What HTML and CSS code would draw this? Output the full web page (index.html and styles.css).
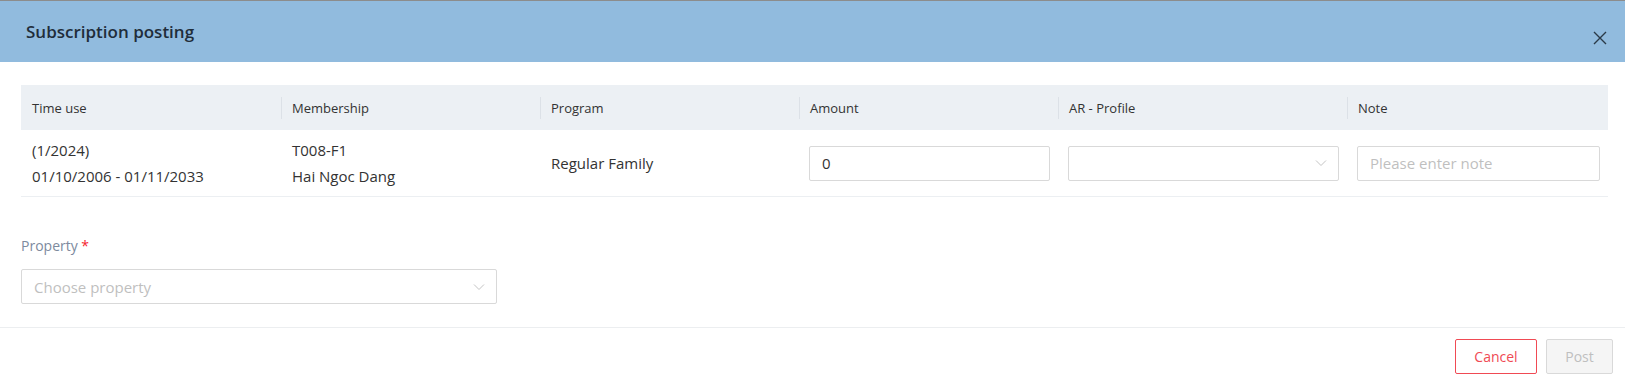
FILE: index.html
```html
<!DOCTYPE html>
<html lang="en">

<head>
  <meta charset="UTF-8">
  <meta name="viewport" content="width=device-width, initial-scale=1.0">
  <title>Subscription posting</title>
  <link rel="stylesheet" href="styles.css">
</head>

<body>
  <div class="modal">
    <header class="modal-header">
      <h2 class="modal-title">Subscription posting</h2>
      <button class="modal-close" type="button" aria-label="Close">
        <svg width="14" height="14" viewBox="0 0 14 14">
          <path d="M1 1L13 13M13 1L1 13" stroke="#2b3a48" stroke-width="1.4" fill="none" />
        </svg>
      </button>
    </header>

    <div class="modal-body">
      <table class="posting-table">
        <colgroup>
          <col style="width: 260px">
          <col style="width: 259px">
          <col style="width: 259px">
          <col style="width: 259px">
          <col style="width: 289px">
          <col style="width: 261px">
        </colgroup>
        <thead>
          <tr>
            <th>Time use</th>
            <th>Membership</th>
            <th>Program</th>
            <th>Amount</th>
            <th>AR - Profile</th>
            <th>Note</th>
          </tr>
        </thead>
        <tbody>
          <tr>
            <td>
              <div class="line">(1/2024)</div>
              <div class="line">01/10/2006 - 01/11/2033</div>
            </td>
            <td>
              <div class="line">T008-F1</div>
              <div class="line">Hai Ngoc Dang</div>
            </td>
            <td>Regular Family</td>
            <td><input class="field" type="text" value="0"></td>
            <td>
              <div class="field select">
                <span class="select-value"></span>
                <svg class="chevron" width="12" height="8" viewBox="0 0 12 8">
                  <path d="M1 1.5L6 6.5L11 1.5" stroke="#c4c4c4" stroke-width="1" fill="none" />
                </svg>
              </div>
            </td>
            <td><input class="field" type="text" placeholder="Please enter note"></td>
          </tr>
        </tbody>
      </table>

      <div class="form-item">
        <label class="form-label">Property <span class="required">*</span></label>
        <div class="field select property-select">
          <span class="select-placeholder">Choose property</span>
          <svg class="chevron" width="12" height="8" viewBox="0 0 12 8">
            <path d="M1 1.5L6 6.5L11 1.5" stroke="#c4c4c4" stroke-width="1" fill="none" />
          </svg>
        </div>
      </div>
    </div>

    <footer class="modal-footer">
      <button class="btn btn-cancel" type="button">Cancel</button>
      <button class="btn btn-post" type="button" disabled>Post</button>
    </footer>
  </div>
</body>

</html>
```

FILE: styles.css
```css
body {
  margin: 0;
  background: #fff;
  font-family: "Open Sans", "Noto Sans", sans-serif;
  color: #333;
  border-top: 1px solid #8c8c8c;
}

/* header bar */
.modal-header {
  display: flex;
  align-items: center;
  justify-content: space-between;
  height: 61px;
  padding: 0 18px 0 26px;
  background-color: #91bbde;
}

.modal-title {
  margin: 0;
  font-size: 17px;
  font-weight: 600;
  color: #1f2d3a;
}

.modal-close {
  margin-top: 12px;
  padding: 0;
  border: 0;
  background: none;
  display: flex;
  cursor: pointer;
}

.modal-body {
  padding: 23px 17px 23px 21px;
}

/* table */
.posting-table {
  width: 1587px;
  table-layout: fixed;
  border-collapse: collapse;
  font-size: 15px;
}

.posting-table th {
  position: relative;
  height: 45px;
  padding: 0 11px;
  background-color: #ecf0f4;
  text-align: left;
  font-size: 13px;
  font-weight: 400;
  color: #333;
}

.posting-table th+th::before {
  content: "";
  position: absolute;
  left: 0;
  top: 50%;
  width: 1px;
  height: 22px;
  transform: translateY(-50%);
  background-color: #dce1e7;
}

.posting-table td {
  height: 66px;
  padding: 0 8px 0 11px;
  border-bottom: 1px solid #eceff2;
  vertical-align: middle;
}

.posting-table td:nth-child(4),
.posting-table td:nth-child(5),
.posting-table td:nth-child(6) {
  padding-left: 10px;
}

.line {
  line-height: 26px;
}

.field {
  box-sizing: border-box;
  width: 100%;
  height: 35px;
  padding: 0 12px;
  border: 1px solid #d9d9d9;
  border-radius: 2px;
  background: #fff;
  font-family: inherit;
  font-size: 15px;
  color: #333;
  outline: none;
}

.field::placeholder {
  color: #bfbfbf;
}

.select {
  display: flex;
  align-items: center;
  justify-content: space-between;
}

.chevron {
  flex: none;
  margin-right: -1px;
}

/* property */
.form-item {
  margin-top: 38px;
}

.form-label {
  display: block;
  padding-bottom: 12px;
  line-height: 22px;
  font-size: 14px;
  color: #7d8a9e;
}

.required {
  color: #f5222d;
}

.property-select {
  width: 476px;
}

.select-placeholder {
  color: #bfbfbf;
}

/* footer */
.modal-footer {
  display: flex;
  justify-content: flex-end;
  gap: 9px;
  padding: 11px 12px 0;
  border-top: 1px solid #eceef0;
}

.btn {
  height: 35px;
  padding: 0 17px;
  border-radius: 2px;
  font-family: inherit;
  font-size: 14px;
  background: #fff;
}

.btn-cancel {
  width: 82px;
  border: 1px solid #f04a54;
  color: #f04a54;
}

.btn-post {
  width: 67px;
  border: 1px solid #d9d9d9;
  background-color: #f5f5f5;
  color: #bfbfbf;
}
```
